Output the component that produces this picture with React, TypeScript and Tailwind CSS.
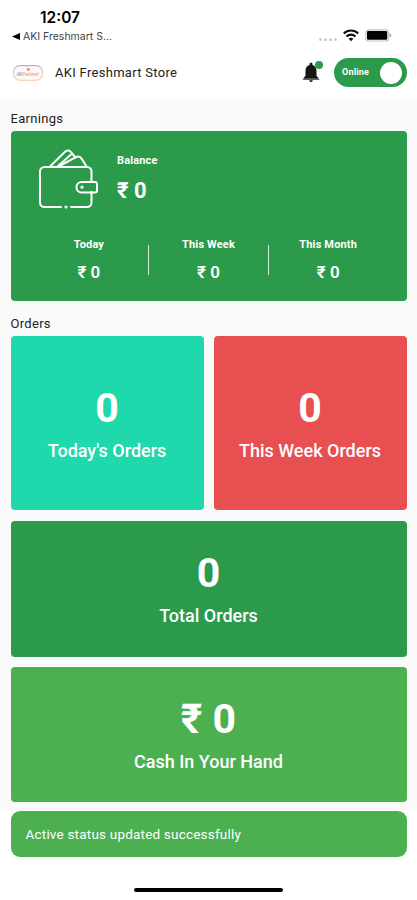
import React from "react";

function Battery() {
  return (
    <svg width="27" height="13" viewBox="0 0 27 13" fill="none">
      <rect x="0.8" y="0.8" width="22.6" height="11.2" rx="2.6" stroke="#c4c4c4" strokeWidth="1.2" />
      <rect x="2" y="2" width="20.2" height="8.8" rx="1.2" fill="#000" />
      <path d="M24.6 4.2v4.2c1-.4 1.6-1.2 1.6-2.1s-.6-1.7-1.6-2.1z" fill="#999" />
    </svg>
  );
}

function Wifi() {
  return (
    <svg width="16" height="13" viewBox="0 0 16 13" fill="none" stroke="#111" strokeWidth="2.1">
      <path d="M0.8 4.4a10.4 10.4 0 0 1 14.4 0" />
      <path d="M3.5 7.4a6.5 6.5 0 0 1 9 0" />
      <path d="M8 12.3 5.6 9.8a3.5 3.5 0 0 1 4.8 0z" fill="#111" stroke="none" />
    </svg>
  );
}

function StoreLogo() {
  return (
    <svg width="30" height="16" viewBox="0 0 30 16">
      <defs>
        <linearGradient id="ring" x1="0" y1="0" x2="0" y2="1">
          <stop offset="0" stopColor="#a9b4dc" />
          <stop offset="0.5" stopColor="#e9c9c6" />
          <stop offset="1" stopColor="#ffc79f" />
        </linearGradient>
      </defs>
      <rect x="0.6" y="0.6" width="28.8" height="14.6" rx="6" fill="#fffaf7" stroke="url(#ring)" strokeWidth="1.1" />
      <circle cx="15.3" cy="4.2" r="1.5" fill="#f08a78" />
      <text x="3.5" y="10.9" fontSize="5" fontWeight="700" fontFamily="Roboto, sans-serif" fill="#a9b8e0" textLength="6">AKI</text>
      <text x="10" y="10.9" fontSize="5" fontWeight="700" fontFamily="Roboto, sans-serif" fill="#f7ab83" textLength="16" lengthAdjust="spacingAndGlyphs">Freshmart</text>
    </svg>
  );
}

function Bell() {
  return (
    <svg width="18" height="21" viewBox="0 0 18 21">
      <path d="M9 .8c.9 0 1.5.6 1.5 1.4v.7c2.5.7 4 2.9 4 5.6v5.2l1.9 2.3v.8H1.6V16l1.9-2.3V8.500c0-2.700 1.500-4.900 4-5.600v-.7C7.500 1.400 8.100.8 9 .8z" fill="#151515" />
      <path d="M.8 16.800h16.400v1.100H.8z" fill="#555" />
      <path d="M7.200 18.200h3.600c0 1.100-.8 1.900-1.800 1.900s-1.800-.8-1.800-1.900z" fill="#222" />
    </svg>
  );
}

function Wallet() {
  return (
    <svg width="60" height="62" viewBox="0 0 60 62" fill="none" stroke="#fff" strokeWidth="2" strokeLinecap="round" strokeLinejoin="round">
      <path d="M53.500 33V22.500a4.500 4.500 0 0 0-4.500-4.500H6.500A4.500 4.500 0 0 0 2 22.500v31a4.500 4.500 0 0 0 4.500 4.500H23" />
      <path d="M33 58h16a4.500 4.500 0 0 0 4.500-4.500V43" />
      <path d="M43.500 33H57a2 2 0 0 1 2 2v6.500a2 2 0 0 1-2 2H43.500a5 5 0 0 1-5-5v-.5a5 5 0 0 1 5-5z" />
      <path d="M12 17.500 27 2.800c2-1.900 4.500-1.500 6 .4l4.500 5.300" />
      <path d="M19.500 17.500 33 5.500M20.500 17.500 37.500 8.300c2.500-1.300 5-.5 6.500 2l4.500 7.200" />
      <circle cx="44" cy="38.200" r=".6" />
      <circle cx="28" cy="58" r=".6" />
    </svg>
  );
}

function Stat({ label }: { label: string }) {
  return (
    <div className="flex flex-1 flex-col items-center">
      <span className="text-[11px] leading-[14px] font-bold tracking-[0.15px]">{label}</span>
      <span className="mt-[9px] text-[17px] leading-[22px] font-semibold">₹ 0</span>
    </div>
  );
}

function Tile({ value, label, className }: { value: string; label: string; className: string }) {
  return (
    <div className={"flex flex-col items-center justify-center rounded-[4px] text-white " + className}>
      <span className="text-[41px] leading-[48px] font-bold">{value}</span>
      <span className="mt-[7px] text-[18px] leading-[24px] font-medium">{label}</span>
    </div>
  );
}

export default function App() {
  return (
    <div className="flex h-[900px] w-[417px] flex-col overflow-hidden bg-white font-['Roboto','DejaVu_Sans',sans-serif] text-[#222]">
      <div className="flex h-[46px] shrink-0 justify-between pr-[25px] pl-[12px]">
        <div className="pt-[9px]">
          <div className="pl-[28px] font-['Inter',sans-serif] text-[15.500px] leading-[18px] font-semibold text-black">12:07</div>
          <div className="mt-[3px] flex items-center font-['Inter',sans-serif] text-[10.500px] leading-[13px] text-[#444]">
            <svg width="8" height="7" viewBox="0 0 8 7" className="mr-[3px]"><path d="M0 3.500 8 0v7z" fill="#000" /></svg>
            AKI Freshmart S...
          </div>
        </div>
        <div className="flex h-[13px] items-center pt-[35px]">
          <div className="mt-[8px] mr-[6px] flex gap-[2px]">
            <i className="size-[3px] rounded-full bg-[#c8c8c8]" />
            <i className="size-[3px] rounded-full bg-[#c8c8c8]" />
            <i className="size-[3px] rounded-full bg-[#c8c8c8]" />
            <i className="size-[3px] rounded-full bg-[#c8c8c8]" />
          </div>
          <Wifi />
          <div className="ml-[6px]"><Battery /></div>
        </div>
      </div>

      <header className="flex h-[54px] shrink-0 items-center pr-[10px] pb-[1px] pl-[13px]">
        <StoreLogo />
        <h1 className="ml-[12px] text-[13px] tracking-[0.3px]">AKI Freshmart Store</h1>
        <div className="relative mr-[14px] ml-auto">
          <Bell />
          <i className="absolute -top-[1px] -right-[3px] size-[8px] rounded-full bg-[#2b9a4a]" />
        </div>
        <div className="flex h-[29px] w-[73px] items-center justify-between rounded-full bg-[#2b9a4a] pr-[5px] pl-[8px]">
          <span className="text-[9px] font-bold tracking-[0.2px] text-white">Online</span>
          <i className="size-[22px] rounded-full bg-white" />
        </div>
      </header>

      <main className="flex h-[711px] shrink-0 flex-col bg-[#fafafa] px-[10.500px]">
        <h2 className="h-[31px] pt-[10px] text-[13px] leading-[17px] tracking-[0.3px]">Earnings</h2>
        <section className="h-[170px] rounded-[4px] bg-[#2b9a4a] text-white">
          <div className="flex h-[107px] pt-[18px] pl-[27.500px]">
            <Wallet />
            <div className="ml-[19px] flex flex-col pt-[5px]">
              <span className="text-[11px] leading-[14px] font-bold tracking-[0.15px]">Balance</span>
              <span className="mt-[9px] text-[22px] leading-[28px] font-bold">₹ 0</span>
            </div>
          </div>
          <div className="flex px-[19px]">
            <Stat label="Today" />
            <i className="mt-[7px] h-[30px] w-px bg-white/80" />
            <Stat label="This Week" />
            <i className="mt-[7px] h-[30px] w-px bg-white/80" />
            <Stat label="This Month" />
          </div>
        </section>
        <h2 className="h-[35px] pt-[14px] text-[13px] leading-[17px] tracking-[0.3px]">Orders</h2>
        <div className="flex gap-[10px]">
          <Tile value="0" label="Today's Orders" className="h-[174px] flex-1 bg-[#1fd9ad]" />
          <Tile value="0" label="This Week Orders" className="h-[174px] flex-1 bg-[#e84f51]" />
        </div>
        <Tile value="0" label="Total Orders" className="mt-[10.500px] h-[136px] bg-[#2b9a4a]" />
        <Tile value="₹ 0" label="Cash In Your Hand" className="mt-[10.500px] h-[135px] bg-[#4caf50]" />
      </main>

      <div className="mx-[10.500px] flex h-[46px] shrink-0 items-center rounded-[9px] bg-[#4caf50] px-[15px] text-[13.500px] tracking-[0.2px] text-white">
        Active status updated successfully
      </div>
      <div className="mx-auto mt-[31px] h-[4px] w-[149px] rounded-full bg-black" />
    </div>
  );
}
